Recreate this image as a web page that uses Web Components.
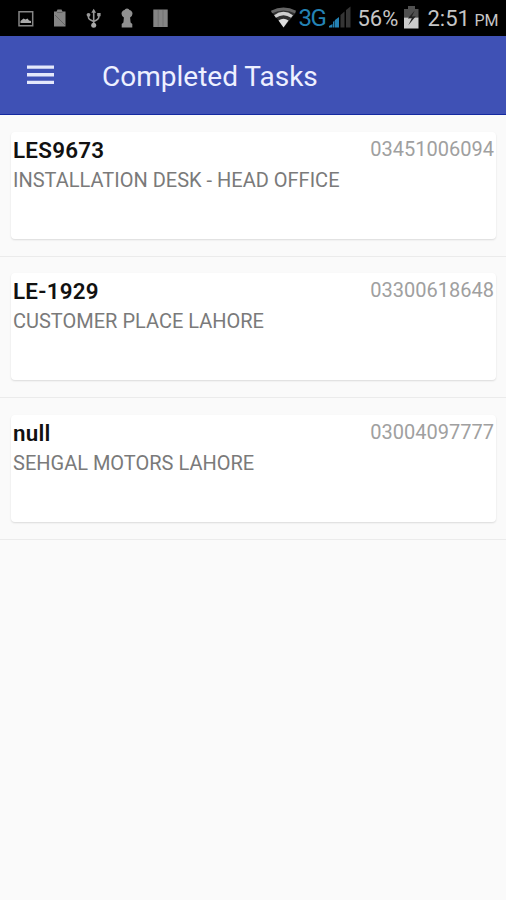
<!DOCTYPE html>
<html lang="en">
<head>
<meta charset="utf-8">
<title>Completed Tasks</title>
<style>
  body {
    margin: 0;
    min-height: 100vh;
    background: #fafafa;
    font-family: Roboto, "Noto Sans", sans-serif;
  }
</style>
</head>
<body>
<status-bar time="2:51" period="PM" battery="56%" network="3G"></status-bar>
<app-bar>Completed Tasks</app-bar>
<task-list>
  <task-card phone="03451006094">
    <span slot="title">LES9673</span>
    INSTALLATION DESK - HEAD OFFICE
  </task-card>
  <task-card phone="03300618648">
    <span slot="title">LE-1929</span>
    CUSTOMER PLACE LAHORE
  </task-card>
  <task-card phone="03004097777">
    <span slot="title">null</span>
    SEHGAL MOTORS LAHORE
  </task-card>
</task-list>

<script>
class StatusBar extends HTMLElement {
    constructor() {
        super();
        this.attachShadow({ mode: "open" });
        this.shadowRoot.innerHTML = `
          <style>
            :host{
              display:flex;
              justify-content:space-between;
              height:36px;
              background:#000;
              color:#c6c6c6;
              font-size:22px;
              line-height:38px;
              white-space:nowrap;
            }
            svg{
              display:block;
              flex:none;
            }
            #status{
              display:flex;
              padding-right:7.5px;
            }
            #network{
              width:29px;
              margin-left:-1px;
              margin-right:1px;
              color:#2483b5;
              font-size:24px;
              line-height:36px;
              letter-spacing:-1.5px;
            }
            #battery{
              width:41px;
              margin-left:5px;
              margin-right:5px;
            }
            #time{
              width:41px;
              margin-left:7px;
            }
            #period{
              margin-left:6px;
              font-size:16px;
              line-height:41px;
            }
          </style>
          <svg width="190" height="36" viewBox="0 0 190 36" fill="#858585">
            <path d="M19 11.8h13.7v14H19z" fill="none" stroke="#858585" stroke-width="1.5"/>
            <path d="M20.5 23v-2l3-2.5 2 1 2-1 1.5 2 2 .5v2z" fill="#aaa"/>
            <path d="M54 11.5h2.5l1-2h4l1 2h3v15H54z"/>
            <path d="M57 12.5h5.5M55 15l10 10" stroke="#656565" stroke-width="1" fill="none"/>
            <g fill="none" stroke="#999" stroke-width="1.6">
              <path d="M93.7 24V11M88.5 15v2.5q0 2 5.2 4 5.2-2 5.2-5V14"/>
            </g>
            <path d="M93.7 8.8l2.4 4h-4.8zM97.2 13h3.4v3.2h-3.4z" fill="#999"/>
            <circle cx="88.5" cy="14.8" r="1.9" fill="#999"/>
            <circle cx="93.7" cy="25.3" r="2.5" fill="#aaa"/>
            <path d="M127 8.5q2 0 2.5 1.5 3 1 3 3.8 0 2.2-2.4 3.7l.5 5 1.7 1.5v3.5h-10.6V24l1.7-1.5.5-5q-2.400-1.500-2.400-3.700 0-2.800 3-3.800.5-1.500 2.500-1.500z" fill="#909090"/>
            <path d="M153.3 9.5h14.4V27h-14.4z"/>
            <path d="M158.2 10v16.5M163 10v16.5" stroke="#6c6c6c" stroke-width=".8"/>
          </svg>
          <div id="status">
            <svg width="28" height="36" viewBox="0 0 28 36" fill="none">
              <path d="M1 12.5q12-7 24 0L13 27z" fill="#303030"/>
              <path d="M.5 12q12-6 24 0" stroke="#666" stroke-width="2.8"/>
              <path d="M4 16.500q8.500-6 17 0" stroke="#d0d0d0" stroke-width="3.2"/>
              <path d="M7.500 20.500q5-3.500 10 0l-5 7z" fill="#ddd"/>
            </svg>
            <span id="network"></span>
            <svg width="24" height="36" viewBox="0 0 24 36">
              <path d="M1 27.5V26l3.500-2v3.500zM5 27.500v-5.500l1.500-1.500v7z" fill="#2483b5"/>
              <path d="M7 27.500V20l4-3v10.500z" fill="#2483b5"/>
              <path d="M12.500 27.500V15l4-3.500v16zM18 27.500V10l4.500-3.500v21z" fill="#353535"/>
            </svg>
            <span id="battery"></span>
            <svg width="17" height="36" viewBox="0 0 17 36">
              <path d="M1 9h4V6h7v3h3.500v8.500H1z" fill="#505050"/>
              <path d="M1 17.500h14.500v11H1z" fill="#ccc"/>
              <path d="M11.800 10.500l-7 8 4-.2-3.500 7 7.500-9-4 .2z" fill="#222"/>
            </svg>
            <span id="time"></span>
            <span id="period"></span>
          </div>
        `;
        for (const name of ["network", "battery", "time", "period"]) {
            this.shadowRoot.getElementById(name).textContent = this.getAttribute(name);
        }
    }
}
customElements.define("status-bar", StatusBar);

class AppBar extends HTMLElement {
    constructor() {
        super();
        this.attachShadow({ mode: "open" });
        this.shadowRoot.innerHTML = `
          <style>
            :host{
              display:flex;
              align-items:center;
              box-sizing:border-box;
              height:79px;
              padding-left:26.5px;
              background:#3f51b5;
              border-bottom:1px solid #1429a0;
              color:#eef0ff;
              font-size:28px;
            }
            svg{
              display:block;
              margin-right:48.5px;
            }
            h1{
              margin:3px 0 0;
              font-size:inherit;
              font-weight:400;
            }
          </style>
          <svg width="27" height="20" viewBox="0 0 27 20" fill="#e4e8fb">
            <path d="M0 .5h27v3.300H0zM0 8.100h27v3.300H0zM0 15.700h27V19H0z"/>
          </svg>
          <h1><slot></slot></h1>
        `;
    }
}
customElements.define("app-bar", AppBar);

class TaskList extends HTMLElement {
    constructor() {
        super();
        this.attachShadow({ mode: "open" });
        this.shadowRoot.innerHTML = `
          <style>
            :host{
              display:grid;
              grid-auto-rows:141.6px;
            }
          </style>
          <slot></slot>
        `;
    }
}
customElements.define("task-list", TaskList);

class TaskCard extends HTMLElement {
    constructor() {
        super();
        this.attachShadow({ mode: "open" });
        this.shadowRoot.innerHTML = `
          <style>
            :host{
              display:flex;
              box-sizing:border-box;
              padding:16.8px 10px 17px 11px;
              border-bottom:1px solid #ebebeb;
            }
            #card{
              flex:1;
              padding:4.75px 2px 0 2px;
              background:#fff;
              border-radius:4px;
              box-shadow:0 1px 2px rgba(0,0,0,.13);
            }
            header{
              display:flex;
              justify-content:space-between;
              height:28px;
            }
            #title{
              color:#111;
              font-size:22.4px;
              font-weight:600;
              line-height:27px;
              letter-spacing:.25px;
            }
            #phone{
              color:#a0a0a0;
              font-size:20px;
              line-height:24px;
            }
            #place{
              color:#7a7a7a;
              font-size:20px;
              line-height:30px;
              white-space:nowrap;
            }
          </style>
          <div id="card">
            <header>
              <span id="title"><slot name="title"></slot></span>
              <span id="phone"></span>
            </header>
            <div id="place"><slot></slot></div>
          </div>
        `;
        this.shadowRoot.querySelector("#phone").textContent = this.getAttribute("phone");
    }
}
customElements.define("task-card", TaskCard);
</script>
</body>
</html>
